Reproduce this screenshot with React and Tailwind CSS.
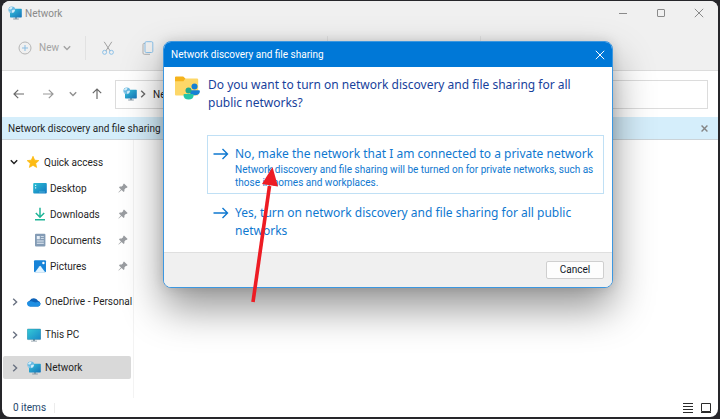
import React, { useState } from 'react';

const quickLinks = [
    { label: 'Desktop', icon: DesktopIcon },
    { label: 'Downloads', icon: DownloadIcon },
    { label: 'Documents', icon: DocumentIcon },
    { label: 'Pictures', icon: PictureIcon },
];

function Chevron({ className = '' }) {
    return (
        <svg className={`w-2 h-2 shrink-0 ${className}`} viewBox="0 0 8 8" fill="none" stroke="currentColor" strokeWidth="1.4">
            <path d="M2.2 0.8 5.6 4 2.2 7.2" />
        </svg>
    );
}

function Cross({ className = '' }) {
    return (
        <svg className={className} viewBox="0 0 10 10" fill="none" stroke="currentColor">
            <path d="M0.8 0.8 9.2 9.2M9.2 0.8 0.8 9.2" />
        </svg>
    );
}

function ArrowLine({ className = '' }) {
    return (
        <svg className={className} viewBox="0 0 16 12" fill="none" stroke="currentColor" strokeWidth="1.4">
            <path d="M0.5 6H14.5M9.5 1l5 5-5 5" />
        </svg>
    );
}

// toolbar arrows, drawn on a square so they rotate cleanly
function NavArrow({ className = '' }) {
    return (
        <svg className={`w-3 h-3 ${className}`} viewBox="0 0 12 12" fill="none" stroke="currentColor" strokeWidth="1.2">
            <path d="M1 6h10M6.8 1.8 11 6 6.8 10.2" />
        </svg>
    );
}

function NetworkIcon() {
    return (
        <svg className="w-3.5 h-3.5 shrink-0" viewBox="0 0 14 14">
            <defs>
                <linearGradient id="netScreen" x1="0" y1="0" x2="1" y2="1">
                    <stop offset="0" stopColor="#35c4dc" />
                    <stop offset="1" stopColor="#1573b8" />
                </linearGradient>
            </defs>
            <path d="M7 11h2v1.6h1.8v.8H5.2v-.8H7z" fill="#8a9aa5" />
            <rect x="2" y="2.8" width="11.8" height="8.6" rx="0.6" fill="url(#netScreen)" />
            <circle cx="3.8" cy="3.8" r="3.4" fill="#69b9e2" />
            <path d="M1 2.2 3 .8l1.6.7-1 1.6-1.8.6zM3.8 4.4l2.4-1 .8 1.1-1.5 2-1.4.2zM.8 4.6l1.5.8.2 1.4z" fill="#d3effa" />
        </svg>
    );
}

function MonitorIcon() {
    return (
        <svg className="w-3.5 h-3.5 shrink-0" viewBox="0 0 14 14">
            <defs>
                <linearGradient id="pcScreen" x1="0" y1="0" x2="1" y2="1">
                    <stop offset="0" stopColor="#35cbd7" />
                    <stop offset="1" stopColor="#1787c8" />
                </linearGradient>
            </defs>
            <path d="M6 11h2v1.7h2v.8H4v-.8h2z" fill="#8a9aa5" />
            <rect x="0.2" y="1" width="13.6" height="10.6" rx="0.8" fill="url(#pcScreen)" stroke="#24728f" strokeWidth="0.4" />
        </svg>
    );
}

function DesktopIcon() {
    return (
        <svg className="w-3.5 h-3.5 shrink-0" viewBox="0 0 14 14">
            <defs>
                <linearGradient id="desk" x1="0" y1="0" x2="1" y2="1">
                    <stop offset="0" stopColor="#2cc0d4" />
                    <stop offset="1" stopColor="#1276c0" />
                </linearGradient>
            </defs>
            <rect x="0.2" y="2" width="13.6" height="10.4" rx="1" fill="url(#desk)" />
            <path d="M2 3.8h1.2V5H2zM2 6.2h1.2v1.2H2z" fill="#d5f7fa" />
            <path d="M6.5 10.4h1v1h-1zM8.5 10.4h1v1h-1zM10.5 10.4h1v1h-1z" fill="#7fd0f0" />
        </svg>
    );
}

function DownloadIcon() {
    return (
        <svg className="w-3.5 h-3.5 shrink-0" viewBox="0 0 14 14" fill="none" stroke="#1fb598" strokeWidth="1.5">
            <path d="M7 .8v9.2M2.8 6 7 10.2 11.2 6M2 12.8h10" />
        </svg>
    );
}

function DocumentIcon() {
    return (
        <svg className="w-3.5 h-3.5 shrink-0" viewBox="0 0 14 14">
            <rect x="2" y="0.8" width="10.4" height="12.6" rx="1" fill="#839bb5" />
            <path d="M3.8 3h3v3.2h-3zM7.8 3.2h3v.9h-3zM7.8 5.2h3v.9h-3zM3.8 7.6h7v.9h-7zM3.8 9.8h7v.9h-7z" fill="#e6eef6" />
        </svg>
    );
}

function PictureIcon() {
    return (
        <svg className="w-3.5 h-3.5 shrink-0" viewBox="0 0 14 14">
            <rect x="1" y="1.2" width="12" height="12" rx="1" fill="#1683d8" />
            <path d="M2 13.2 6.5 7.2a.8.8 0 0 1 1.2 0L12.2 13.2z" fill="#e2f4ff" />
            <circle cx="10.4" cy="4" r="1.2" fill="#fff" />
        </svg>
    );
}

function OneDriveIcon() {
    return (
        <svg className="w-3.5 h-3.5 shrink-0" viewBox="0 0 14 14">
            <path d="M3.2 11.6a3.1 3.1 0 0 1-.4-6A4.6 4.6 0 0 1 11 5.8a3 3 0 0 1 .2 5.8z" fill="#0d62b8" />
            <path d="M3.2 11.6a3.1 3.1 0 0 1-2.8-4.5C3 5.4 6 6.6 8 7.6c2-.9 4-.6 5.4.3a3 3 0 0 1-2.2 3.7z" fill="#1f8fe3" />
        </svg>
    );
}

function StarIcon() {
    return (
        <svg className="w-3.5 h-3.5 shrink-0" viewBox="0 0 14 14">
            <path d="M7 1.3 8.7 5.2l4.1.4-3.1 2.8.9 4L7 10.3l-3.6 2.1.9-4L1.2 5.6l4.1-.4z" fill="#fdbb13" stroke="#fdbb13" strokeWidth="0.8" strokeLinejoin="round" />
        </svg>
    );
}

function PinIcon() {
    return (
        <svg className="w-2.5 h-2.5 shrink-0" viewBox="0 0 10 10">
            <path d="M6 .4 9.6 4l-.9.9-.6-.2L6.5 6.3l-.1 1.9-.8.8L3.6 7 .8 9.6.4 9.2 3 6.4 1 4.4l.8-.8 1.9-.1 1.6-1.6-.2-.6z" fill="#9a9da1" />
        </svg>
    );
}

function FolderPeopleIcon() {
    return (
        <svg className="w-[26px] h-6 shrink-0" viewBox="0 0 26 24">
            <path d="M1 2.5h22a1.2 1.2 0 0 1 1.2 1.2V18.5a1 1 0 0 1-1 1H2a1 1 0 0 1-1-1z" fill="#fdd768" />
            <path d="M1 1.5A1 1 0 0 1 2 .6h7.2l2.2 2-2 2.6H1z" fill="#f5b31c" />
            <circle cx="20.5" cy="10.5" r="3" fill="#1680d4" />
            <path d="M16.5 14.2h8.4a1 1 0 0 1 1 1c0 2.7-2 4-5.2 4s-5.2-1.3-5.2-4a1 1 0 0 1 1-1z" fill="#1680d4" />
            <circle cx="14.5" cy="14.5" r="3" fill="#20a98f" />
            <path d="M10.5 18h8.2a1 1 0 0 1 1 1c0 3-2 4.5-5.1 4.5S9.5 22 9.5 19a1 1 0 0 1 1-1z" fill="#25c6a6" />
        </svg>
    );
}

function TreeItem({ icon: Icon, label, active }) {
    return (
        <button className={`flex items-center w-full h-[23px] pl-2 rounded-xs text-left whitespace-nowrap ${active ? 'bg-[#d9d9d9]' : ''}`}>
            <Chevron className="text-gray-500 mr-2" />
            <Icon />
            <span className="ml-1">{label}</span>
        </button>
    );
}

function NetworkDialog({ onClose }) {
    return (
        <div
            role="dialog"
            aria-labelledby="dialog-title"
            className="absolute left-[163px] top-[41px] w-[450px] rounded-lg overflow-hidden bg-white border border-[#3c97e0] shadow-[0_20px_40px_rgba(0,0,0,0.42),0_0_12px_rgba(0,0,0,0.12)]"
        >
            <div className="flex items-center justify-between h-[25px] px-[7px] bg-[#0078d7] text-white">
                <h1 id="dialog-title">Network discovery and file sharing</h1>
                <button aria-label="Close dialog" onClick={onClose}>
                    <Cross className="w-2.5 h-2.5" />
                </button>
            </div>

            <div className="pl-2.5 pr-2 pt-[9px] pb-3">
                <div className="flex gap-2">
                    <FolderPeopleIcon />
                    <h2 className="font-['Noto_Sans',sans-serif] text-xs leading-[18px] text-[#17429c]">
                        Do you want to turn on network discovery and file sharing for all public networks?
                    </h2>
                </div>

                <div className="mt-[23px] ml-[33px]">
                    <button className="flex w-full gap-1.5 pl-[5px] pt-[9px] pb-1 border border-[#c0e0f5] text-left text-[#0f78d0]">
                        <ArrowLine className="w-4 h-3 mt-[3px] shrink-0" />
                        <span>
                            <span className="block font-['Noto_Sans',sans-serif] text-xs leading-[18px]">No, make the network that I am connected to a private network</span>
                            <span className="block leading-[13px]">
                                Network discovery and file sharing will be turned on for private networks, such as those in homes and workplaces.
                            </span>
                        </span>
                    </button>
                    <button className="flex w-full gap-1.5 pl-1.5 pt-2.5 text-left text-[#0f78d0]">
                        <ArrowLine className="w-4 h-3 mt-[3px] shrink-0" />
                        <span className="font-['Noto_Sans',sans-serif] text-xs leading-[18px]">Yes, turn on network discovery and file sharing for all public networks</span>
                    </button>
                </div>
            </div>

            <div className="flex justify-end px-2 py-2 bg-[#f0f0f0] border-t border-[#dfdfdf]">
                <button onClick={onClose} className="w-[58px] h-[18px] rounded-xs border border-[#cfcfcf] bg-[#fdfdfd] leading-4 text-gray-900">
                    Cancel
                </button>
            </div>
        </div>
    );
}

export default function App() {
    const [dialogOpen, setDialogOpen] = useState(true);

    return (
        <div className="relative flex min-h-screen bg-[#26262a] pl-0.5 pr-0.5 pt-px pb-0.5 font-[Roboto,sans-serif] text-[10px] text-[#1f1f1f]">
            <div className="flex flex-col flex-1 min-w-0 rounded-lg overflow-hidden bg-white">
                <header className="bg-[#f0f0f0] border-b border-[#dcdcdc]">
                    <div className="flex items-center h-6 pl-1.5 pr-3.5 text-[#8a8a8a]">
                        <NetworkIcon />
                        <span className="ml-[3px]">Network</span>
                        <div className="ml-auto flex items-center gap-7">
                            <button aria-label="Minimize">
                                <svg className="w-2.5 h-2.5" viewBox="0 0 10 10" stroke="currentColor"><path d="M1 5.5h8" /></svg>
                            </button>
                            <button aria-label="Maximize">
                                <svg className="w-2.5 h-2.5" viewBox="0 0 10 10" fill="none" stroke="currentColor"><rect x="1.5" y="1.5" width="7" height="7" rx="0.5" /></svg>
                            </button>
                            <button aria-label="Close">
                                <Cross className="w-2.5 h-2.5" />
                            </button>
                        </div>
                    </div>
                    <div className="flex items-center h-[45px] pl-4 text-[#a3a3a3]">
                        <button className="flex items-center">
                            <svg className="w-3.5 h-3.5" viewBox="0 0 14 14" fill="none">
                                <circle cx="7" cy="7" r="6" stroke="#b5b5b5" />
                                <path d="M7 4v6M4 7h6" stroke="#8bbde2" />
                            </svg>
                            <span className="ml-[7px]">New</span>
                            <Chevron className="ml-1 rotate-90" />
                        </button>
                        <span className="ml-3.5 h-6 w-px bg-[#e2e2e2]" />
                        <button aria-label="Cut" className="ml-4">
                            <svg className="w-3 h-3.5" viewBox="0 0 12 14" fill="none">
                                <path d="M2.2.8 8.2 10M9.8.8 3.8 10" stroke="#a0a0a0" />
                                <circle cx="2.6" cy="11.3" r="2" stroke="#8bc0e8" />
                                <circle cx="9.4" cy="11.3" r="2" stroke="#8bc0e8" />
                            </svg>
                        </button>
                        <button aria-label="Copy" className="ml-7">
                            <svg className="w-3 h-3.5" viewBox="0 0 12 14" fill="none">
                                <path d="M3 2.5H2a1 1 0 0 0-1 1V12a1.3 1.3 0 0 0 1.3 1.3H8" stroke="#b0b0b0" />
                                <rect x="3" y="0.7" width="7.8" height="10.8" rx="1.2" stroke="#8bc0e8" />
                            </svg>
                        </button>
                        <span className="ml-[173px] h-6 w-px bg-[#e2e2e2]" />
                        <span className="ml-38 h-6 w-px bg-[#e2e2e2]" />
                    </div>
                </header>

                <div className="flex items-center h-[46px] pl-[11px] pr-2.5 text-[#6b6b6b]">
                    <button aria-label="Back"><NavArrow className="rotate-180" /></button>
                    <button aria-label="Forward" className="ml-[17px] text-[#999999]"><NavArrow /></button>
                    <button aria-label="Recent locations" className="ml-[15px] text-[#909090]"><Chevron className="rotate-90" /></button>
                    <button aria-label="Up" className="ml-3.5"><NavArrow className="-rotate-90" /></button>
                    <div className="flex flex-1 items-center h-[29px] ml-3 pl-[7px] border border-[#dcdcdc]">
                        <NetworkIcon />
                        <Chevron className="ml-0.5" />
                        <button className="ml-1.5 text-[#1f1f1f]">Network</button>
                    </div>
                </div>

                <div className="flex items-center h-[23px] pl-1.5 pr-2.5 bg-[#d5eefb] border-b border-[#cbd3d8]">
                    <span className="whitespace-nowrap">Network discovery and file sharing are turned off.</span>
                    <button aria-label="Dismiss" className="ml-auto text-[#858585]">
                        <Cross className="w-[7px] h-[7px] stroke-2" />
                    </button>
                </div>

                <div className="flex flex-1">
                    <nav className="w-[132px] pl-px pr-0.5 pt-2.5 pb-3 border-r border-[#f3f3f3]">
                        <button className="flex items-center h-6 pl-[7px] whitespace-nowrap">
                            <Chevron className="rotate-90 mr-2" />
                            <StarIcon />
                            <span className="ml-1">Quick access</span>
                        </button>
                        <ul className="mt-px">
                            {quickLinks.map(({ label, icon: Icon }) => (
                                <li key={label}>
                                    <button className="flex items-center w-full h-[26px] pl-[30px] pr-[3px]">
                                        <Icon />
                                        <span className="ml-[3px] mr-auto">{label}</span>
                                        <PinIcon />
                                    </button>
                                </li>
                            ))}
                        </ul>
                        <div className="mt-[11px] flex flex-col gap-2.5">
                            <TreeItem icon={OneDriveIcon} label="OneDrive - Personal" />
                            <TreeItem icon={MonitorIcon} label="This PC" />
                            <TreeItem icon={NetworkIcon} label="Network" active />
                        </div>
                    </nav>
                    <main className="flex-1" />
                </div>

                <footer className="flex items-center h-[19px] pl-[11px] pr-[7px]">
                    <span className="text-[#24466b]">0 items</span>
                    <span className="ml-2 h-2.5 w-px bg-[#ececec]" />
                    <div className="ml-auto flex gap-2 text-[#2b2b2b]">
                        <button aria-label="Details view">
                            <svg className="w-2.5 h-2.5" viewBox="0 0 10 10" stroke="currentColor"><path d="M0 .5h10M0 3.5h10M0 6.5h10M0 9.5h10" /></svg>
                        </button>
                        <button aria-label="Large icons view">
                            <svg className="w-2.5 h-2.5" viewBox="0 0 10 10" fill="none" stroke="currentColor"><path d="M.5.5h9v8h-9zM0 9.5h10" /></svg>
                        </button>
                    </div>
                </footer>
            </div>

            {dialogOpen && <NetworkDialog onClose={() => setDialogOpen(false)} />}

            {/* red pointer laid over the dialog */}
            <svg className="absolute left-[250px] top-[166px] w-7 h-[137px] pointer-events-none" viewBox="0 0 28 137">
                <path d="M3 136 19.5 20" stroke="#ed1c24" strokeWidth="3.6" />
                <path d="M22.5 1 28 20.5 12 18z" fill="#ed1c24" />
            </svg>
        </div>
    );
}
